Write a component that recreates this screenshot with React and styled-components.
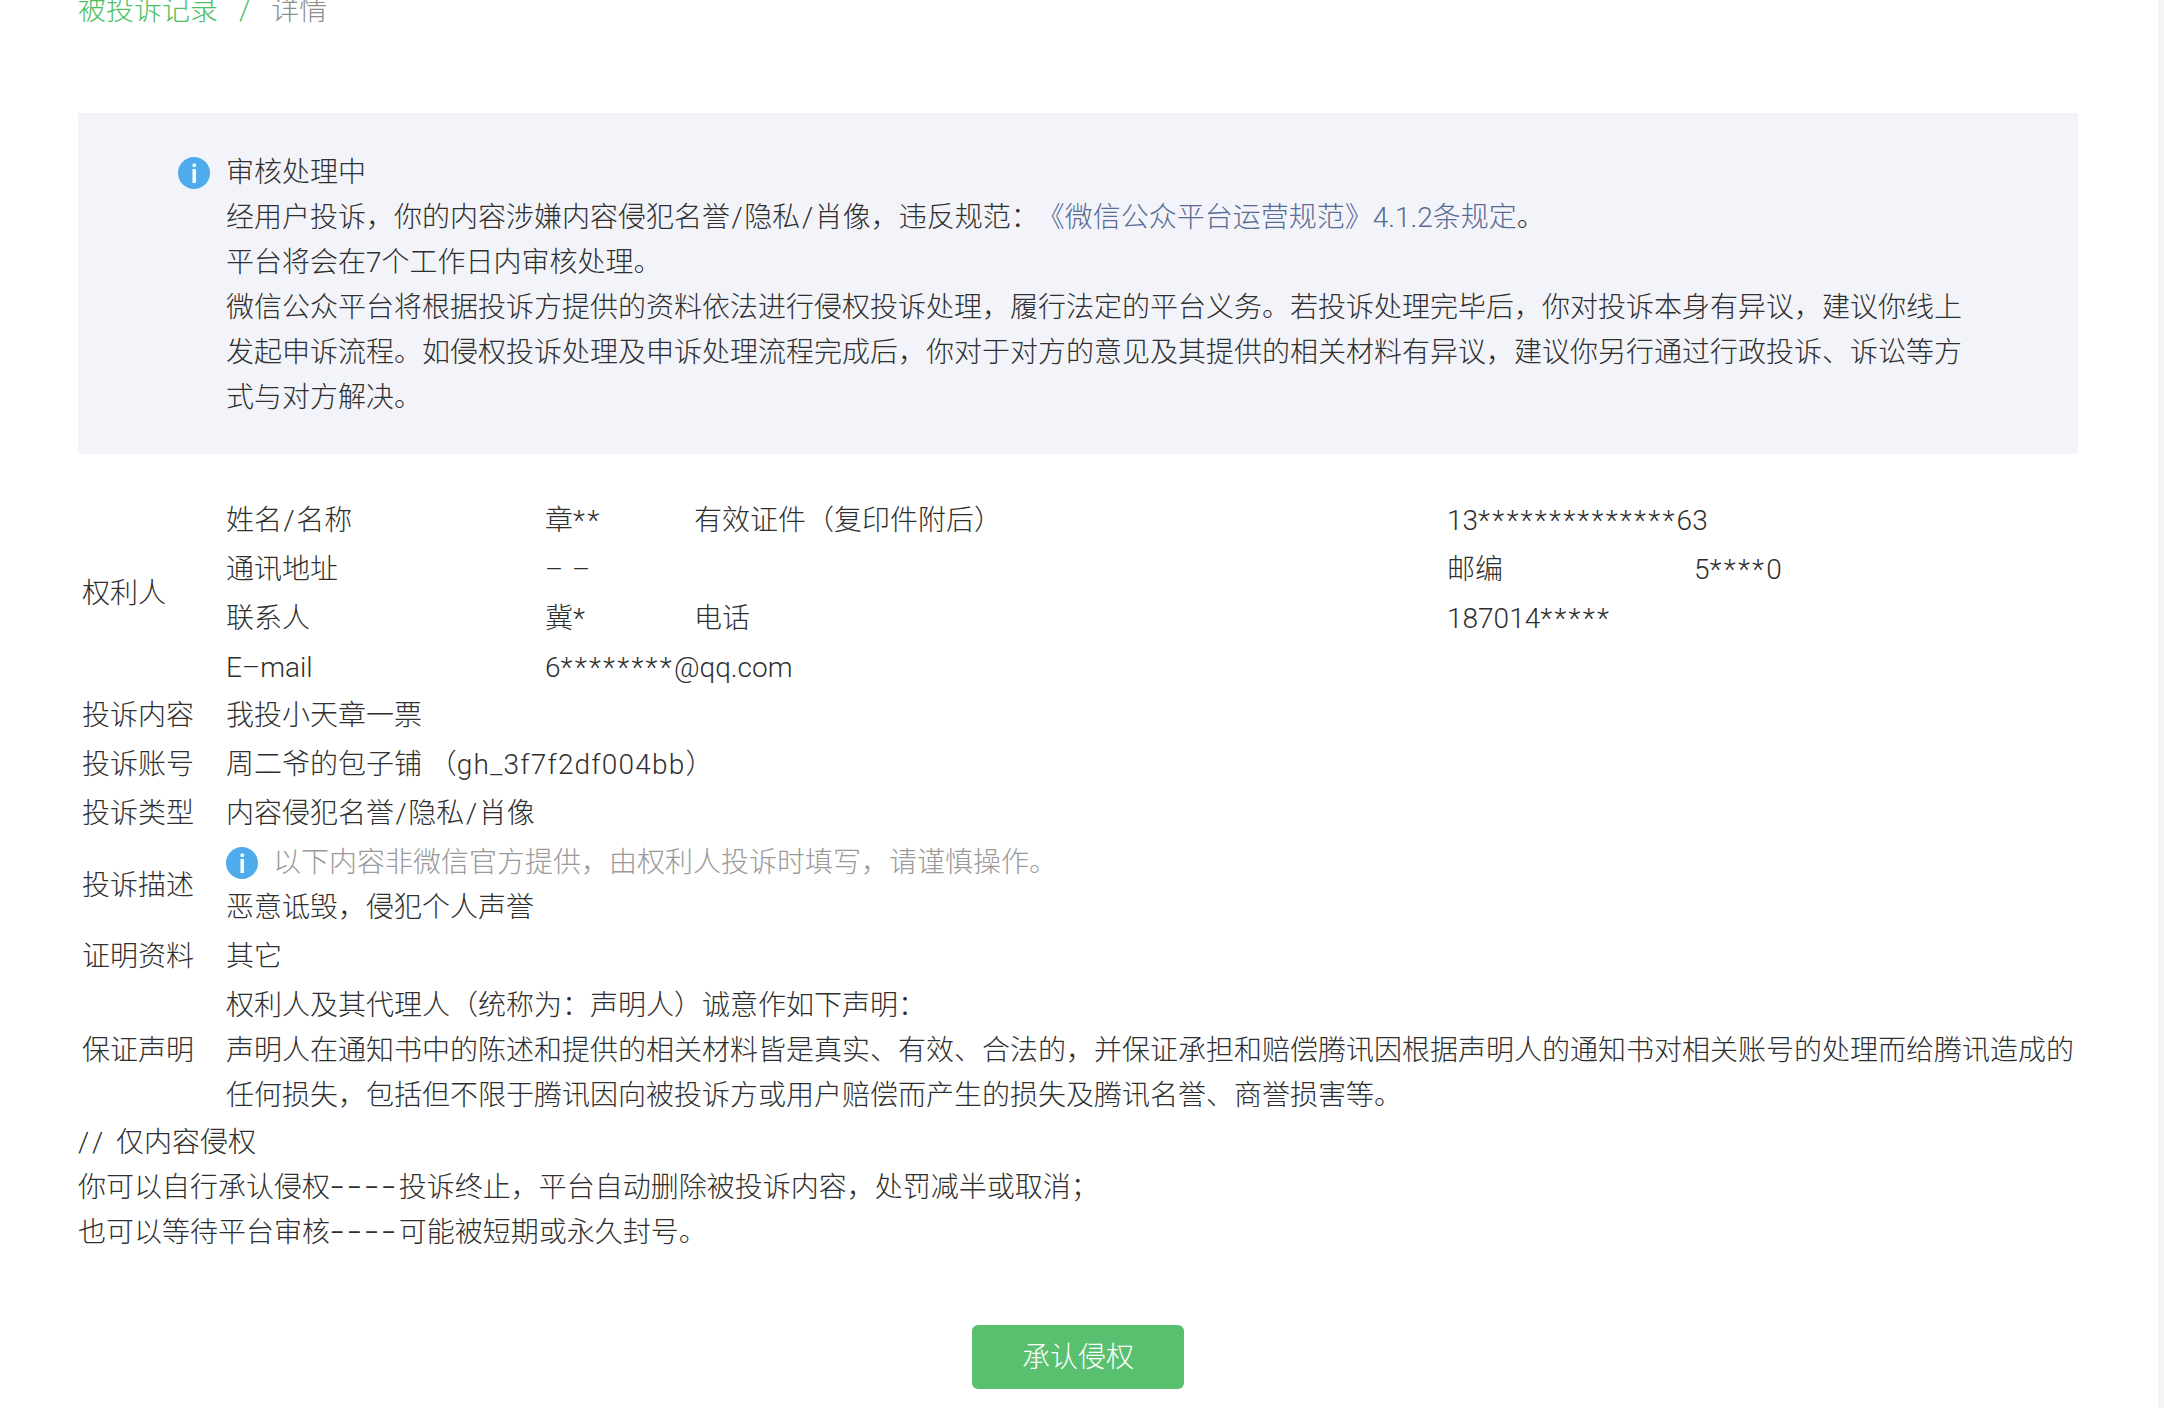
import React from 'react';
import styled, { createGlobalStyle } from 'styled-components';

const GlobalStyle = createGlobalStyle`
  html, body {
    margin: 0;
    padding: 0;
    background: #fff;
    overflow: hidden;
  }
  body {
    font-family: Roboto, "Noto Sans CJK SC", sans-serif;
    font-size: 28px;
    font-weight: 300;
    line-height: 45px;
    color: #2f2f2f;
  }
`;

const InfoIcon = () => (
  <S.Icon viewBox="0 0 32 32">
    <circle cx="16" cy="16" r="16" fill="#4fabec" />
    <rect x="14.5" y="6.5" width="3.5" height="3.5" rx="1" fill="#fff" />
    <rect x="14.5" y="12" width="3.5" height="14" fill="#fff" />
  </S.Icon>
);

const ContactRow = ({ label, value, side, sideValue, extra, extraValue }) => (
  <S.ContactRow>
    <span>{label}</span>
    <span>{value}</span>
    <span>{side}</span>
    {extra ? (
      <>
        <span>{extra}</span>
        <span>{extraValue}</span>
      </>
    ) : (
      <S.Wide>{sideValue}</S.Wide>
    )}
  </S.ContactRow>
);

const App = () => (
  <S.Page>
    <GlobalStyle />
    <S.Crumbs>
      <S.CrumbLink href="#">被投诉记录</S.CrumbLink>
      <S.Slash>/</S.Slash>
      <S.CrumbNow>详情</S.CrumbNow>
    </S.Crumbs>

    <S.Notice>
      <S.NoticeIcon>
        <InfoIcon />
      </S.NoticeIcon>
      <S.NoticeText>
        <div>审核处理中</div>
        <div>
          经用户投诉，你的内容涉嫌内容侵犯名誉<S.Sep>/</S.Sep>隐私<S.Sep>/</S.Sep>肖像，违反规范：
          <S.Rule href="#">《微信公众平台运营规范》4.1.2条规定</S.Rule>。
        </div>
        <div>平台将会在7个工作日内审核处理。</div>
        <div>
          微信公众平台将根据投诉方提供的资料依法进行侵权投诉处理，履行法定的平台义务。若投诉处理完毕后，你对投诉本身有异议，建议你线上发起申诉流程。如侵权投诉处理及申诉处理流程完成后，你对于对方的意见及其提供的相关材料有异议，建议你另行通过行政投诉、诉讼等方式与对方解决。
        </div>
      </S.NoticeText>
    </S.Notice>

    <S.Details>
      <S.Row>
        <S.Label>权利人</S.Label>
        <S.ContactList>
          <ContactRow
            label={<>姓名<S.Sep>/</S.Sep>名称</>}
            value={<>章<S.Stars>**</S.Stars></>}
            side="有效证件（复印件附后）"
            sideValue={<>13<S.Stars>**************</S.Stars>63</>}
          />
          <ContactRow
            label="通讯地址"
            value={<S.Dashes>– –</S.Dashes>}
            extra="邮编"
            extraValue={<>5<S.Stars>****</S.Stars>0</>}
          />
          <ContactRow
            label="联系人"
            value={<>冀<S.Stars>*</S.Stars></>}
            side="电话"
            sideValue={<>187014<S.Stars>*****</S.Stars></>}
          />
          <ContactRow
            label="E–mail"
            value={<>6<S.Stars>********</S.Stars>@qq.com</>}
          />
        </S.ContactList>
      </S.Row>
      <S.Row>
        <S.Label>投诉内容</S.Label>
        <S.Value>我投小天章一票</S.Value>
      </S.Row>
      <S.Row>
        <S.Label>投诉账号</S.Label>
        <S.Value>周二爷的包子铺 （<S.Account>gh_3f7f2df004bb</S.Account>）</S.Value>
      </S.Row>
      <S.Row>
        <S.Label>投诉类型</S.Label>
        <S.Value>内容侵犯名誉<S.Sep>/</S.Sep>隐私<S.Sep>/</S.Sep>肖像</S.Value>
      </S.Row>
      <S.Row>
        <S.Label>投诉描述</S.Label>
        <S.Value>
          <S.Hint>
            <InfoIcon />
            以下内容非微信官方提供，由权利人投诉时填写，请谨慎操作。
          </S.Hint>
          <div>恶意诋毁，侵犯个人声誉</div>
        </S.Value>
      </S.Row>
      <S.Row>
        <S.Label>证明资料</S.Label>
        <S.Value>其它</S.Value>
      </S.Row>
      <S.Row>
        <S.Label>保证声明</S.Label>
        <S.Value>
          <div>权利人及其代理人（统称为：声明人）诚意作如下声明：</div>
          <div>
            声明人在通知书中的陈述和提供的相关材料皆是真实、有效、合法的，并保证承担和赔偿腾讯因根据声明人的通知书对相关账号的处理而给腾讯造成的任何损失，包括但不限于腾讯因向被投诉方或用户赔偿而产生的损失及腾讯名誉、商誉损害等。
          </div>
        </S.Value>
      </S.Row>
    </S.Details>

    <S.Note>
      <div><S.Slashes>//</S.Slashes> 仅内容侵权</div>
      <div>你可以自行承认侵权<S.Dash>––––</S.Dash>投诉终止，平台自动删除被投诉内容，处罚减半或取消；</div>
      <div>也可以等待平台审核<S.Dash>––––</S.Dash>可能被短期或永久封号。</div>
    </S.Note>

    <S.Actions>
      <S.Primary>承认侵权</S.Primary>
    </S.Actions>
    <S.Track />
  </S.Page>
);

const S = {};

S.Page = styled.div`
  width: 2164px;
  height: 1408px;
  padding: 0 86px 0 78px;
  box-sizing: border-box;
  overflow: hidden;
  position: relative;
`;

S.Track = styled.div`
  position: absolute;
  top: 0;
  right: 0;
  bottom: 0;
  width: 6px;
  background: #f5f5f5;
`;

S.Crumbs = styled.div`
  display: flex;
  align-items: center;
  height: 45px;
  margin-top: -12px;
`;

S.CrumbLink = styled.a`
  color: #4fbf63;
  text-decoration: none;
`;

S.Slash = styled.span`
  margin: 0 21px;
  color: #4fbf63;
`;

S.CrumbNow = styled.span`
  color: #8e8e8e;
`;

S.Notice = styled.section`
  display: flex;
  margin-top: 80px;
  padding: 37px 100px 34px 100px;
  background: #f3f4f9;
`;

S.NoticeIcon = styled.div`
  flex: none;
  width: 48px;
  padding-top: 7px;
`;

S.NoticeText = styled.div`
  flex: 1;
`;

S.Icon = styled.svg`
  display: inline-block;
  width: 32px;
  height: 32px;
  flex: none;
`;

S.Rule = styled.a`
  margin-left: 12px;
  color: #576b95;
  text-decoration: none;
`;

S.Sep = styled.span`
  margin: 0 1.6px;
`;

S.Details = styled.div`
  margin-top: 42px;
`;

S.Row = styled.div`
  display: grid;
  grid-template-columns: 148px 1fr;
  align-items: center;
  padding: 2px 0;
`;

S.Label = styled.div`
  padding-left: 4px;
`;

S.Value = styled.div``;

S.ContactList = styled.div`
  display: grid;
  row-gap: 4px;
  margin-bottom: -1px;
`;

S.ContactRow = styled.div`
  display: grid;
  grid-template-columns: 319px 149px 753px 247px 1fr;
  height: 45px;
`;

S.Wide = styled.span`
  grid-column: span 2;
`;

S.Stars = styled.span`
  letter-spacing: 2.3px;
`;

S.Dashes = styled.span`
  word-spacing: 2px;
`;

S.Account = styled.span`
  letter-spacing: 1.2px;
`;

S.Hint = styled.div`
  display: flex;
  align-items: center;
  gap: 15px;
  color: #9a9a9a;
`;

S.Note = styled.div`
  margin-top: 0;
`;

S.Slashes = styled.span`
  letter-spacing: 6px;
`;

S.Dash = styled.span`
  font-size: 22px;
  font-weight: 400;
  letter-spacing: 2.75px;
  vertical-align: 2px;
`;

S.Actions = styled.div`
  display: flex;
  justify-content: center;
  margin-top: 70px;
`;

S.Primary = styled.button`
  width: 212px;
  height: 64px;
  border: 0;
  border-radius: 6px;
  background: #59c070;
  color: #fff;
  font: inherit;
  cursor: pointer;
`;

export default App;
